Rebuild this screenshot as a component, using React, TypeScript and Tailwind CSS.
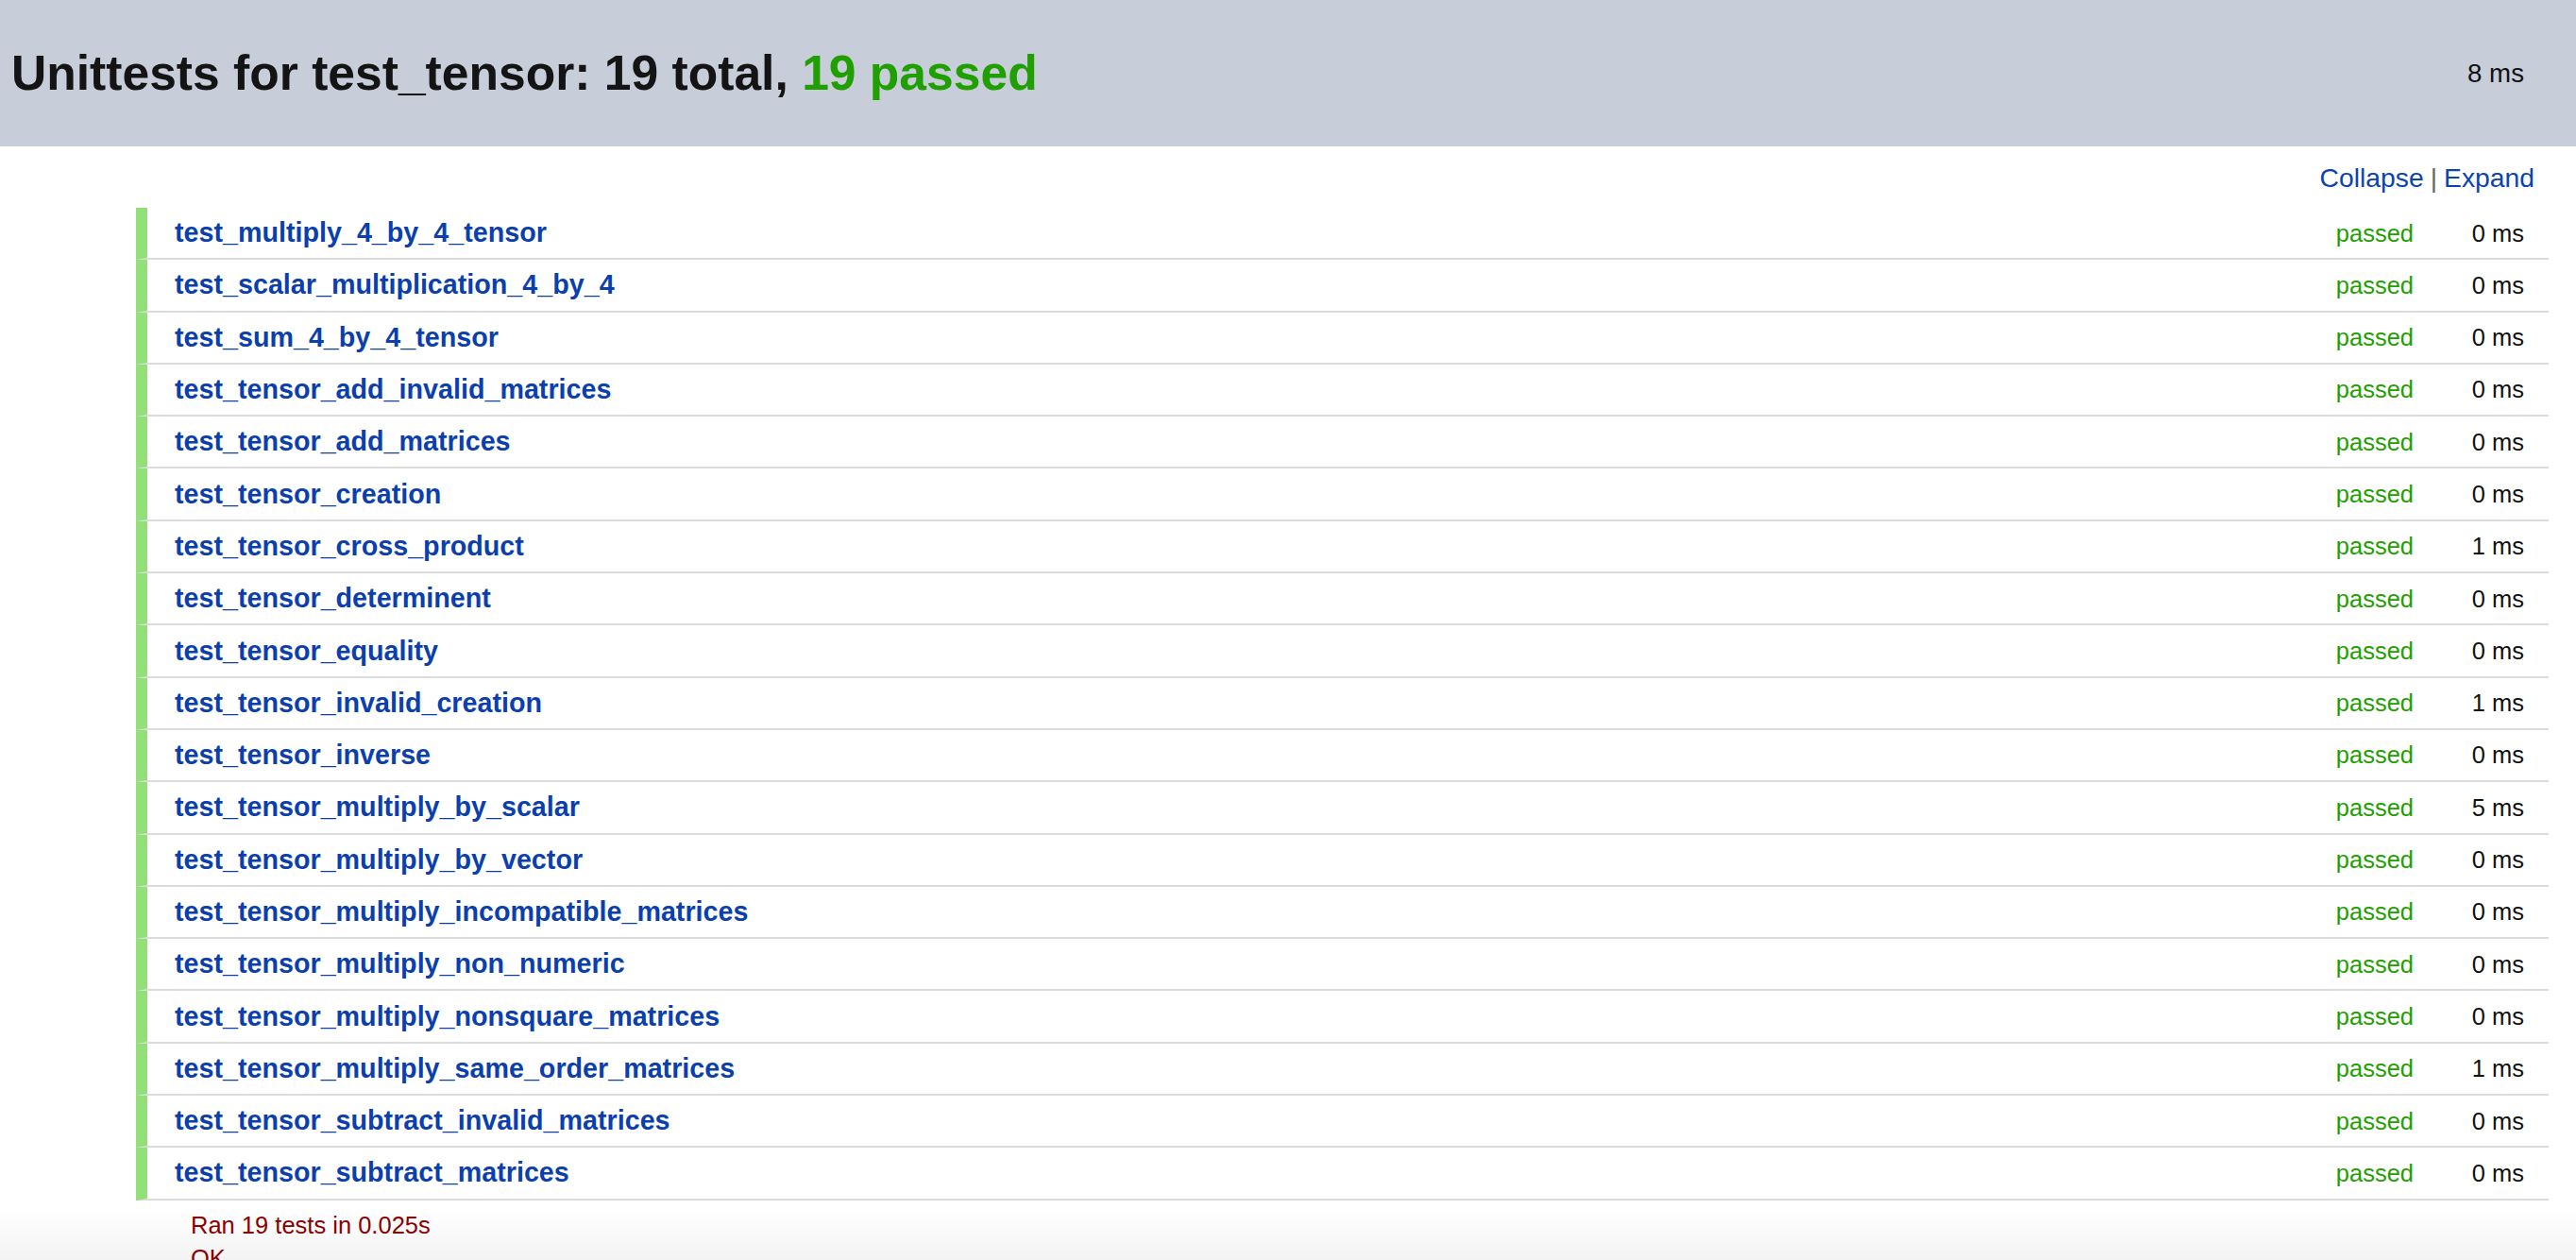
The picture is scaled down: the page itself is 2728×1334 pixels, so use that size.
import React from "react";

type T = { name: string; ms: number };

const tests: T[] = [
  { name: "test_multiply_4_by_4_tensor", ms: 0 },
  { name: "test_scalar_multiplication_4_by_4", ms: 0 },
  { name: "test_sum_4_by_4_tensor", ms: 0 },
  { name: "test_tensor_add_invalid_matrices", ms: 0 },
  { name: "test_tensor_add_matrices", ms: 0 },
  { name: "test_tensor_creation", ms: 0 },
  { name: "test_tensor_cross_product", ms: 1 },
  { name: "test_tensor_determinent", ms: 0 },
  { name: "test_tensor_equality", ms: 0 },
  { name: "test_tensor_invalid_creation", ms: 1 },
  { name: "test_tensor_inverse", ms: 0 },
  { name: "test_tensor_multiply_by_scalar", ms: 5 },
  { name: "test_tensor_multiply_by_vector", ms: 0 },
  { name: "test_tensor_multiply_incompatible_matrices", ms: 0 },
  { name: "test_tensor_multiply_non_numeric", ms: 0 },
  { name: "test_tensor_multiply_nonsquare_matrices", ms: 0 },
  { name: "test_tensor_multiply_same_order_matrices", ms: 1 },
  { name: "test_tensor_subtract_invalid_matrices", ms: 0 },
  { name: "test_tensor_subtract_matrices", ms: 0 },
];

export default function App() {
  return (
    <div
      className="h-[1334px] w-full overflow-hidden bg-[linear-gradient(to_bottom,#ffffff_1280px,#f3f3f3_1334px)] text-[#111]"
      style={{ fontFamily: '"Liberation Sans", Arial, Helvetica, sans-serif' }}
    >
      <header className="flex h-[155px] items-center justify-between bg-[#c7cdd9] pl-[12px] pr-[55px]">
        <h1 className="text-[51.6px] font-bold leading-none text-[#141414]">
          Unittests for test_tensor: 19 total,{" "}
          <span className="text-[#1f9f00]">19 passed</span>
        </h1>
        <div className="text-[27.7px] leading-none text-[#111]">8 ms</div>
      </header>

      <div className="flex h-[65px] justify-end pt-[17px] pr-[44px] text-[28.3px] leading-[32px]">
        <a className="text-[#0b43b3]">Collapse</a>
        <span className="px-[7px] text-[#666]">|</span>
        <a className="text-[#0b43b3]">Expand</a>
      </div>

      <div className="ml-[144px] mr-[29px]">
        {tests.map((t) => (
          <div
            key={t.name}
            className="flex h-[55.3px] items-center border-b-2 border-l-[12px] border-b-[#dcdcdc] border-l-[#93df78] pl-[29px] pr-[26px]"
          >
            <div className="flex-1 text-[28.7px] font-bold text-[#0b3fae]">
              {t.name}
            </div>
            <div className="text-right text-[25.5px] text-[#1f9f00]">passed</div>
            <div className="w-[117px] text-right text-[25.5px] text-[#111]">
              {t.ms} ms
            </div>
          </div>
        ))}
      </div>

      <div className="ml-[202px] mt-[9px] text-[25.5px] leading-[35px] text-[#8b0000]">
        <div>Ran 19 tests in 0.025s</div>
        <div>OK</div>
      </div>
    </div>
  );
}
